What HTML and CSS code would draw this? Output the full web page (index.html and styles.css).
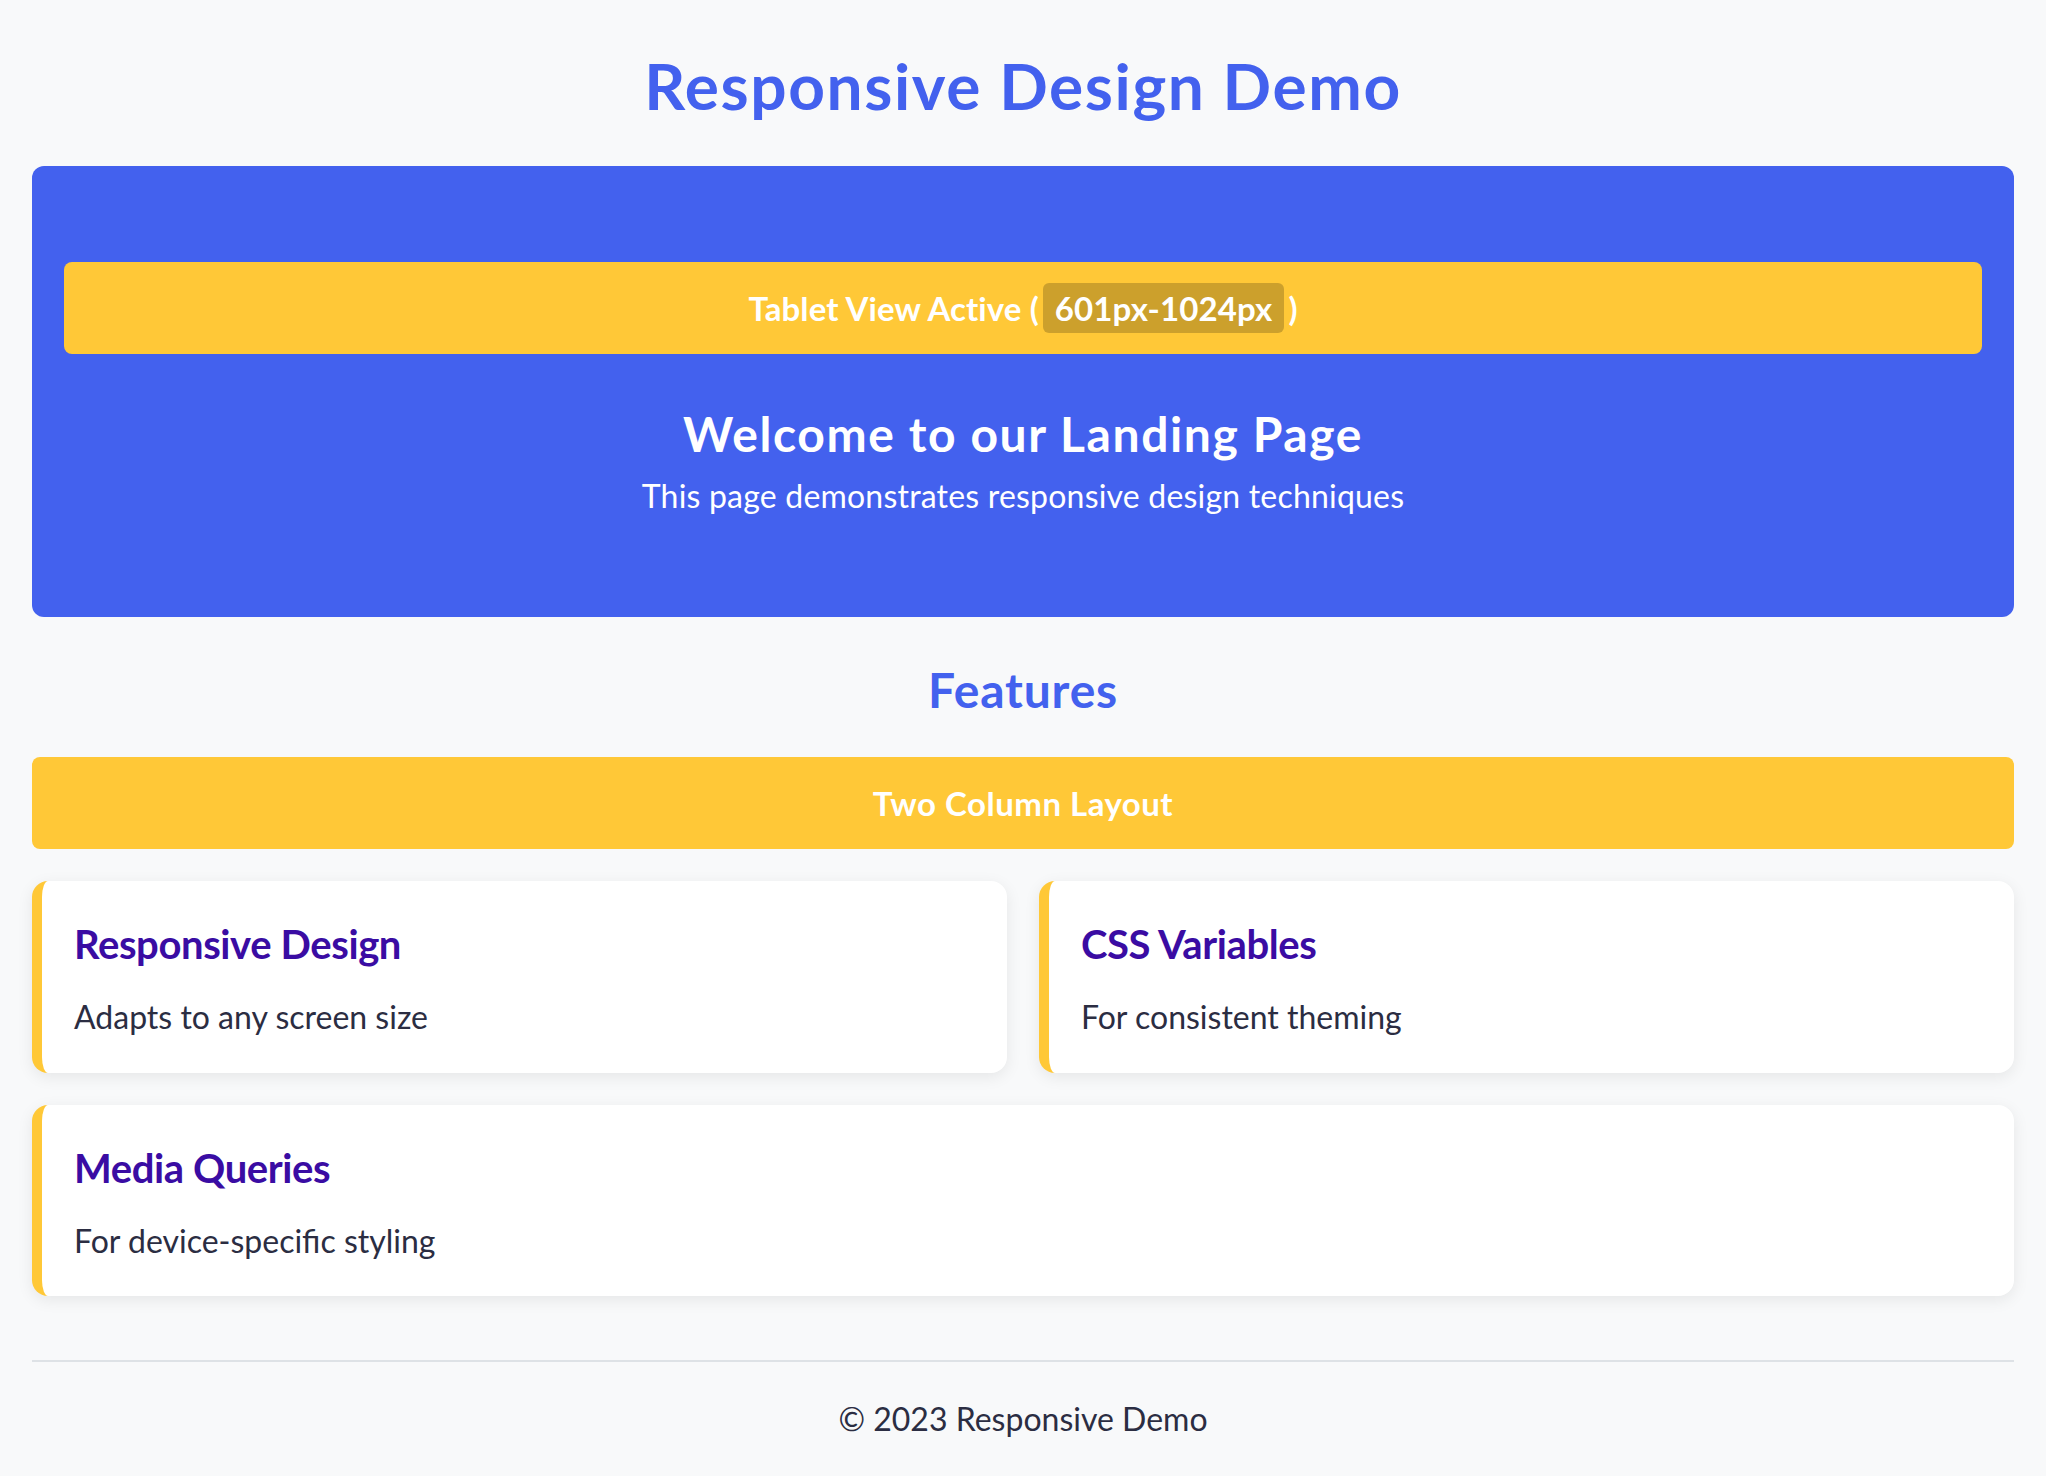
FILE: index.html
```html
<!DOCTYPE html>
<html lang="en">
<head>
<meta charset="utf-8">
<title>Responsive Design Demo</title>
<link rel="stylesheet" href="styles.css">
</head>
<body>
<div class="page">
  <h1 class="title">Responsive Design Demo</h1>
  <section class="hero">
    <div class="view-bar">
      <span>Tablet View Active (</span><span class="badge">601px-1024px</span><span>)</span>
    </div>
    <h2 class="hero-title">Welcome to our Landing Page</h2>
    <p class="hero-sub">This page demonstrates responsive design techniques</p>
  </section>
  <h2 class="section-title">Features</h2>
  <div class="layout-bar">Two Column Layout</div>
  <div class="grid">
    <div class="card">
      <h3 class="card-title">Responsive Design</h3>
      <p class="card-text">Adapts to any screen size</p>
    </div>
    <div class="card">
      <h3 class="card-title">CSS Variables</h3>
      <p class="card-text">For consistent theming</p>
    </div>
    <div class="card card-wide">
      <h3 class="card-title">Media Queries</h3>
      <p class="card-text">For device-specific styling</p>
    </div>
  </div>
  <footer class="footer">
    <p class="footer-text">© 2023 Responsive Demo</p>
  </footer>
</div>
</body>
</html>
```
FILE: styles.css
```css
* { box-sizing: border-box; }
html, body { margin: 0; padding: 0; }
body {
  background: #f8f9fa;
  color: #2b2d42;
  font-family: "Lato", "Open Sans", sans-serif;
  font-size: 32px;
  line-height: 1.2;
}
.page {
  padding: 48px 32px 34px;
}
.title {
  margin: 0;
  text-align: center;
  color: #4361ee;
  font-size: 64px;
  font-weight: 700;
  line-height: 76.8px;
  letter-spacing: 1.6px;
}
.hero {
  margin-top: 41px;
  background: #4361ee;
  border-radius: 12px;
  padding: 96px 32px 101px;
  text-align: center;
  color: #fff;
}
.view-bar, .layout-bar {
  height: 92px;
  background: #ffc837;
  border-radius: 8px;
  display: flex;
  align-items: center;
  justify-content: center;
  color: #fff;
  font-size: 33px;
  font-weight: 700;
  line-height: 42px;
}
.view-bar {
  letter-spacing: 0.1px;
}
.layout-bar {
  margin-top: 39px;
  letter-spacing: 0.5px;
}
.badge {
  background: rgba(0, 0, 0, 0.2);
  border-radius: 6px;
  padding: 4px 12px;
  margin: 0 4px;
}
.hero-title {
  margin: 51px 0 0;
  font-size: 48px;
  font-weight: 700;
  line-height: 57.6px;
  letter-spacing: 1.6px;
}
.hero-sub {
  margin: 15px 0 0;
  font-size: 32px;
  line-height: 38.4px;
  letter-spacing: 0.2px;
}
.section-title {
  margin: 44px 0 0;
  text-align: center;
  color: #4361ee;
  font-size: 48px;
  font-weight: 700;
  line-height: 57.6px;
  letter-spacing: 0.8px;
}
.grid {
  margin-top: 32px;
  display: grid;
  grid-template-columns: 1fr 1fr;
  gap: 32px;
}
.card {
  background: #fff;
  border-left: 10px solid #ffc837;
  border-radius: 16px;
  padding: 39px 32px 36px;
  box-shadow: 0 4px 16px rgba(0, 0, 0, 0.08);
}
.card-wide {
  grid-column: 1 / -1;
}
.card-title {
  margin: 0 0 30px;
  color: #3a0ca3;
  font-size: 40px;
  font-weight: 700;
  line-height: 48px;
  letter-spacing: -0.4px;
}
.card-text {
  margin: 0;
  font-size: 32px;
  line-height: 38.4px;
}
.footer {
  margin-top: 64px;
  border-top: 2px solid #dee2e6;
  text-align: center;
}
.footer-text {
  margin: 38px 0 0;
  font-size: 32px;
  line-height: 38.4px;
}
```
